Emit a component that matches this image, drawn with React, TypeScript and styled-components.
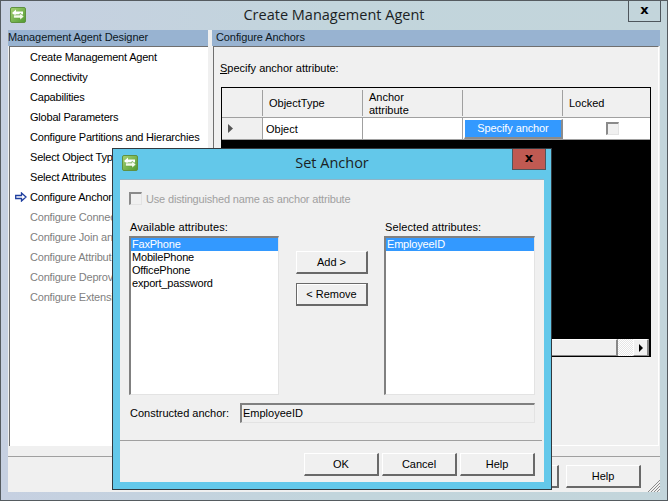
import React from "react";
import styled, { createGlobalStyle } from "styled-components";

const Global = createGlobalStyle`
  html, body { margin: 0; padding: 0; background: #c3d5db; }
  body { font-family: "Liberation Sans", Arial, sans-serif; font-size: 11px; color: #000; overflow: hidden; }
  * { box-sizing: border-box; }
`;

const Win = styled.div`
  position: relative;
  width: 668px;
  height: 501px;
  display: flex;
  flex-direction: column;
  overflow: hidden;
  background: linear-gradient(90deg, #c6d0e1 0%, #c2d5dc 50%, #c3d5db 100%);
  border: 1px solid #555b60;
`;

const TitleBar = styled.div<{ $h: number }>`
  position: relative;
  height: ${(p) => p.$h}px;
  flex: none;
  display: flex;
  align-items: flex-start;
  justify-content: center;
`;

const TitleText = styled.div`
  font-family: "Open Sans", sans-serif;
  font-size: 14.5px;
  color: #1b1f24;
  line-height: 28px;
`;

const IconSlot = styled.div<{ $left: number }>`
  position: absolute;
  left: ${(p) => p.$left}px;
  top: 6px;
  width: 16px;
  height: 16px;
`;

const CloseBtn = styled.div<{ $red?: boolean }>`
  position: absolute;
  top: ${(p) => (p.$red ? 0 : -1)}px;
  right: ${(p) => (p.$red ? -2 : 6)}px;
  width: ${(p) => (p.$red ? 34 : 33)}px;
  height: ${(p) => (p.$red ? 21 : 22)}px;
  display: flex;
  align-items: center;
  justify-content: center;
  background: ${(p) => (p.$red ? "#c05a52" : "transparent")};
  border: 1px solid #4e565c;
  border-top: none;
  font-family: "DejaVu Sans", sans-serif;
  font-weight: 700;
  font-size: 13px;
  line-height: 1;
  color: #000;
  padding-bottom: 3px;
`;

const Content = styled.div`
  flex: 1;
  min-height: 0;
  margin: 0 7px 8px 7px;
  background: #f0f0f0;
  display: flex;
  flex-direction: column;
`;

const Panes = styled.div`
  height: 416px;
  flex: none;
  display: flex;
  gap: 4px;
`;

const Pane = styled.div<{ $w?: number }>`
  ${(p) => (p.$w ? `width: ${p.$w}px; flex: none;` : "flex: 1; min-width: 0;")}
  display: flex;
  flex-direction: column;
`;

const PaneHead = styled.div<{ $pad?: number }>`
  height: 16px;
  flex: none;
  background: #98b3d1;
  color: #0c1722;
  font-size: 11px;
  letter-spacing: -0.1px;
  line-height: 15px;
  padding-left: ${(p) => p.$pad ?? 0}px;
  white-space: nowrap;
`;

const SideList = styled.div`
  flex: 1;
  margin-left: 1px;
  background: #fff;
  border-top: 1px solid #6f6f6f;
  border-left: 1px solid #6f6f6f;
  overflow: hidden;
`;

const Step = styled.div<{ $off?: boolean }>`
  position: relative;
  height: 20px;
  line-height: 20px;
  padding-left: 20px;
  font-size: 11px;
  letter-spacing: -0.2px;
  white-space: nowrap;
  color: ${(p) => (p.$off ? "#7f7f7f" : "#000")};
`;

const StepArrow = styled.svg`
  position: absolute;
  left: 5px;
  top: 5px;
`;

const Body = styled.div`
  flex: 1;
  margin-left: 1px;
  margin-right: 1px;
  background: #f0f0f0;
  border-top: 1px solid #6f6f6f;
  border-left: 1px solid #6f6f6f;
  border-right: 1px solid #fff;
  border-bottom: 1px solid #fff;
  padding: 14px 6px 0 6px;
`;

const Hint = styled.div`
  font-size: 11px;
  line-height: 14px;
  height: 26px;
  & u { text-underline-offset: 1px; }
`;

const Table = styled.div`
  width: 430px;
  height: 270px;
  margin-left: 1px;
  background: #000;
  border: 1px solid #000;
  display: flex;
  flex-direction: column;
`;

const HeadRow = styled.div`
  display: grid;
  grid-template-columns: 41px 100px 100px 100px 1fr;
  height: 30px;
  background: #f0f0f0;
  border-bottom: 1px solid #a0a0a0;
  flex: none;
`;

const HeadCell = styled.div`
  position: relative;
  display: flex;
  align-items: center;
  padding: 2px 6px 0 6px;
  font-size: 11px;
  line-height: 13px;
  &:not(:last-child)::after {
    content: "";
    position: absolute;
    right: 0;
    top: 2px;
    bottom: 1px;
    width: 1px;
    background: #a0a0a0;
  }
`;

const DataRow = styled.div`
  display: grid;
  grid-template-columns: 41px 100px 100px 100px 1fr;
  height: 22px;
  background: #fff;
  border-bottom: 1px solid #a0a0a0;
  flex: none;
`;

const Cell = styled.div`
  display: flex;
  align-items: center;
  padding-left: 3px;
  font-size: 11px;
  border-right: 1px solid #a0a0a0;
  &:last-child { border-right: none; justify-content: center; padding: 0 0 0 11px; }
`;

const RowHead = styled(Cell)`
  background: #f0f0f0;
  padding-left: 6px;
`;

const BtnCell = styled(Cell)`
  padding-left: 1px;
  border-right: none;
`;

const BlueBtn = styled.div`
  width: 99px;
  height: 20px;
  background: #3399ff;
  border: 2px solid #8c8c8c;
  border-top: 1px solid #fff;
  border-left: 1px solid #fff;
  color: #fff;
  font-size: 11px;
  letter-spacing: -0.1px;
  display: flex;
  align-items: center;
  justify-content: center;
  padding-bottom: 1px;
`;

const Check = styled.div`
  width: 13px;
  height: 13px;
  flex: none;
  background: #f0f0f0;
  border: 1px solid #e3e3e3;
  border-top: 2px solid #8a8a8a;
  border-left: 2px solid #8a8a8a;
`;

const BlackFill = styled.div`
  flex: 1;
`;

const HScroll = styled.div`
  height: 17px;
  flex: none;
  display: flex;
  background: #fff;
  margin-right: 1px;
`;

const ScrollTrack = styled.div`
  flex: 1;
  background: #f0f0f0;
  border-right: 2px solid #888;
  border-bottom: 1px solid #888;
  border-top: 1px solid #fff;
`;

const ScrollDither = styled.div`
  width: 15px;
  background: repeating-conic-gradient(#fff 0 25%, #e6e6e6 0 50%) 0 0 / 2px 2px;
`;

const ScrollArrow = styled.div`
  width: 16px;
  background: #f0f0f0;
  border-right: 2px solid #888;
  border-bottom: 1px solid #888;
  border-top: 1px solid #fff;
  border-left: 1px solid #fff;
  display: flex;
  align-items: center;
  justify-content: center;
  &::before {
    content: "";
    border-left: 4px solid #000;
    border-top: 4px solid transparent;
    border-bottom: 4px solid transparent;
  }
`;

const Footer = styled.div`
  flex: 1;
  position: relative;
  display: flex;
  justify-content: flex-end;
  align-items: flex-start;
  gap: 7px;
  padding: 8px 19px 0 0;
  margin-top: 10px;
  border-top: 1px solid #a0a0a0;
`;

const Btn = styled.div<{ $def?: boolean; $w?: number }>`
  width: ${(p) => p.$w ?? 75}px;
  height: 23px;
  flex: none;
  display: flex;
  align-items: center;
  justify-content: center;
  background: #f0f0f0;
  font-size: 11px;
  border-top: 1px solid ${(p) => (p.$def ? "#696969" : "#fff")};
  border-left: 1px solid ${(p) => (p.$def ? "#696969" : "#fff")};
  border-right: 2px solid #696969;
  border-bottom: 2px solid #696969;
  box-shadow: ${(p) => (p.$def ? "inset 1px 1px 0 #fff" : "none")};
`;

const Grip = styled.svg`
  position: absolute;
  right: 0;
  bottom: 0;
`;

const Dialog = styled.div`
  position: absolute;
  left: 111px;
  top: 147px;
  width: 440px;
  height: 342px;
  background: #63c8ea;
  border: 1px solid #32393f;
  display: flex;
  flex-direction: column;
  padding: 0 7px 7px 7px;
`;

const DlgInner = styled.div`
  flex: 1;
  background: #f0f0f0;
  border-top: 1px solid #8fb4c6;
  padding: 12px 9px 0 9px;
  display: flex;
  flex-direction: column;
`;

const CheckRow = styled.div`
  display: flex;
  align-items: center;
  gap: 4px;
  color: #a0a0a0;
  height: 13px;
  font-size: 11px;
  letter-spacing: -0.17px;
  margin-bottom: 15px;
`;

const Columns = styled.div`
  display: flex;
  height: 175px;
`;

const ListCol = styled.div<{ $w: number; $gap?: number }>`
  width: ${(p) => p.$w}px;
  flex: none;
  margin-left: ${(p) => p.$gap ?? 0}px;
  display: flex;
  flex-direction: column;
`;

const Label = styled.div`
  font-size: 11px;
  line-height: 14px;
  height: 16px;
  padding-left: 1px;
  letter-spacing: 0.1px;
  white-space: nowrap;
`;

const ListBox = styled.div`
  flex: 1;
  background: #fff;
  border-top: 2px solid #808080;
  border-left: 2px solid #808080;
  border-right: 1px solid #e3e3e3;
  border-bottom: 1px solid #e3e3e3;
`;

const Item = styled.div<{ $sel?: boolean }>`
  height: 13px;
  line-height: 13px;
  font-size: 11px;
  letter-spacing: -0.2px;
  padding-left: 1px;
  white-space: nowrap;
  background: ${(p) => (p.$sel ? "#3399ff" : "transparent")};
  color: ${(p) => (p.$sel ? "#fff" : "#000")};
`;

const MidCol = styled.div`
  width: 72px;
  flex: none;
  margin-left: 17px;
  padding-top: 31px;
  display: flex;
  flex-direction: column;
  gap: 9px;
`;

const ConstructedRow = styled.div`
  display: flex;
  align-items: center;
  height: 20px;
  margin-top: 8px;
`;

const ConstructedLabel = styled.div`
  width: 111px;
  flex: none;
  padding-left: 1px;
  font-size: 11px;
`;

const TextBox = styled.div`
  width: 295px;
  height: 20px;
  flex: none;
  border-top: 2px solid #808080;
  border-left: 2px solid #808080;
  border-right: 1px solid #e3e3e3;
  border-bottom: 1px solid #e3e3e3;
  padding-left: 1px;
  font-size: 11px;
  line-height: 16px;
`;

const DlgRule = styled.div`
  height: 1px;
  background: #a0a0a0;
  margin: 17px -7px 0 -9px;
`;

const DlgButtons = styled.div`
  display: flex;
  justify-content: flex-end;
  gap: 3px;
  margin-top: 12px;
`;

const AppIcon = ({ id }: { id: string }) => (
  <svg width="16" height="16" viewBox="0 0 16 16">
    <defs>
      <linearGradient id={id} x1="0" y1="0" x2="1" y2="1">
        <stop offset="0" stopColor="#a8d274" />
        <stop offset="1" stopColor="#4f9a30" />
      </linearGradient>
    </defs>
    <rect x="0.5" y="0.5" width="15" height="15" rx="1.5" fill={`url(#${id})`} stroke="#5f9140" />
    <path d="M2 6 L6 2.5 V4.5 H13 V7.5 H6 V9.5 Z" fill="#fff" />
    <path d="M14 9.5 L10 6 V8 H3.5 V11 H10 V13 Z" fill="#f4fbea" stroke="#5d9a3a" strokeWidth="0.5" />
  </svg>
);

const steps: [string, boolean][] = [
  ["Create Management Agent", false],
  ["Connectivity", false],
  ["Capabilities", false],
  ["Global Parameters", false],
  ["Configure Partitions and Hierarchies", false],
  ["Select Object Types", false],
  ["Select Attributes", false],
  ["Configure Anchors", false],
  ["Configure Connector Filter", true],
  ["Configure Join and Projection Rules", true],
  ["Configure Attribute Flow", true],
  ["Configure Deprovisioning", true],
  ["Configure Extensions", true],
];

export default function App() {
  return (
    <>
      <Global />
      <Win>
        <TitleBar $h={29}>
          <IconSlot $left={9}><AppIcon id="ga" /></IconSlot>
          <TitleText>Create Management Agent</TitleText>
          <CloseBtn>x</CloseBtn>
        </TitleBar>
        <Content>
          <Panes>
            <Pane $w={200}>
              <PaneHead>Management Agent Designer</PaneHead>
              <SideList>
                {steps.map(([t, off]) => (
                  <Step key={t} $off={off}>
                    {t === "Configure Anchors" && (
                      <StepArrow width="12" height="10" viewBox="0 0 12 10">
                        <path d="M0.7 3.5 H6.5 V1 L11 5 L6.5 9 V6.5 H0.7 Z" fill="#fff" stroke="#1f3f9f" strokeWidth="1.3" />
                      </StepArrow>
                    )}
                    {t}
                  </Step>
                ))}
              </SideList>
            </Pane>
            <Pane>
              <PaneHead $pad={4}>Configure Anchors</PaneHead>
              <Body>
                <Hint><u>S</u>pecify anchor attribute:</Hint>
                <Table>
                  <HeadRow>
                    <HeadCell />
                    <HeadCell>ObjectType</HeadCell>
                    <HeadCell>Anchor<br />attribute</HeadCell>
                    <HeadCell />
                    <HeadCell>Locked</HeadCell>
                  </HeadRow>
                  <DataRow>
                    <RowHead>
                      <svg width="6" height="9" viewBox="0 0 6 9"><path d="M0 0 L5 4.5 L0 9 Z" fill="#555" /></svg>
                    </RowHead>
                    <Cell>Object</Cell>
                    <Cell />
                    <BtnCell><BlueBtn>Specify anchor</BlueBtn></BtnCell>
                    <Cell><Check /></Cell>
                  </DataRow>
                  <BlackFill />
                  <HScroll>
                    <ScrollTrack />
                    <ScrollDither />
                    <ScrollArrow />
                  </HScroll>
                </Table>
              </Body>
            </Pane>
          </Panes>
          <Footer>
            <Btn>Finish</Btn>
            <Btn>Help</Btn>
            <Grip width="13" height="13" viewBox="0 0 13 13">
              <path d="M13 1 L1 13 M13 4 L4 13 M13 7 L7 13 M13 10 L10 13" stroke="#8c8c8c" strokeWidth="1" />
            </Grip>
          </Footer>
        </Content>
        <Dialog>
          <TitleBar $h={30}>
            <IconSlot $left={2}><AppIcon id="gb" /></IconSlot>
            <TitleText>Set Anchor</TitleText>
            <CloseBtn $red>x</CloseBtn>
          </TitleBar>
          <DlgInner>
            <CheckRow><Check />Use distinguished name as anchor attribute</CheckRow>
            <Columns>
              <ListCol $w={150}>
                <Label>Available attributes:</Label>
                <ListBox>
                  <Item $sel>FaxPhone</Item>
                  <Item>MobilePhone</Item>
                  <Item>OfficePhone</Item>
                  <Item>export_password</Item>
                </ListBox>
              </ListCol>
              <MidCol>
                <Btn $w={72}>Add &gt;</Btn>
                <Btn $w={72} $def>&lt; Remove</Btn>
              </MidCol>
              <ListCol $w={151} $gap={16}>
                <Label>Selected attributes:</Label>
                <ListBox>
                  <Item $sel>EmployeeID</Item>
                </ListBox>
              </ListCol>
            </Columns>
            <ConstructedRow>
              <ConstructedLabel>Constructed anchor:</ConstructedLabel>
              <TextBox>EmployeeID</TextBox>
            </ConstructedRow>
            <DlgRule />
            <DlgButtons>
              <Btn>OK</Btn>
              <Btn>Cancel</Btn>
              <Btn>Help</Btn>
            </DlgButtons>
          </DlgInner>
        </Dialog>
      </Win>
    </>
  );
}
